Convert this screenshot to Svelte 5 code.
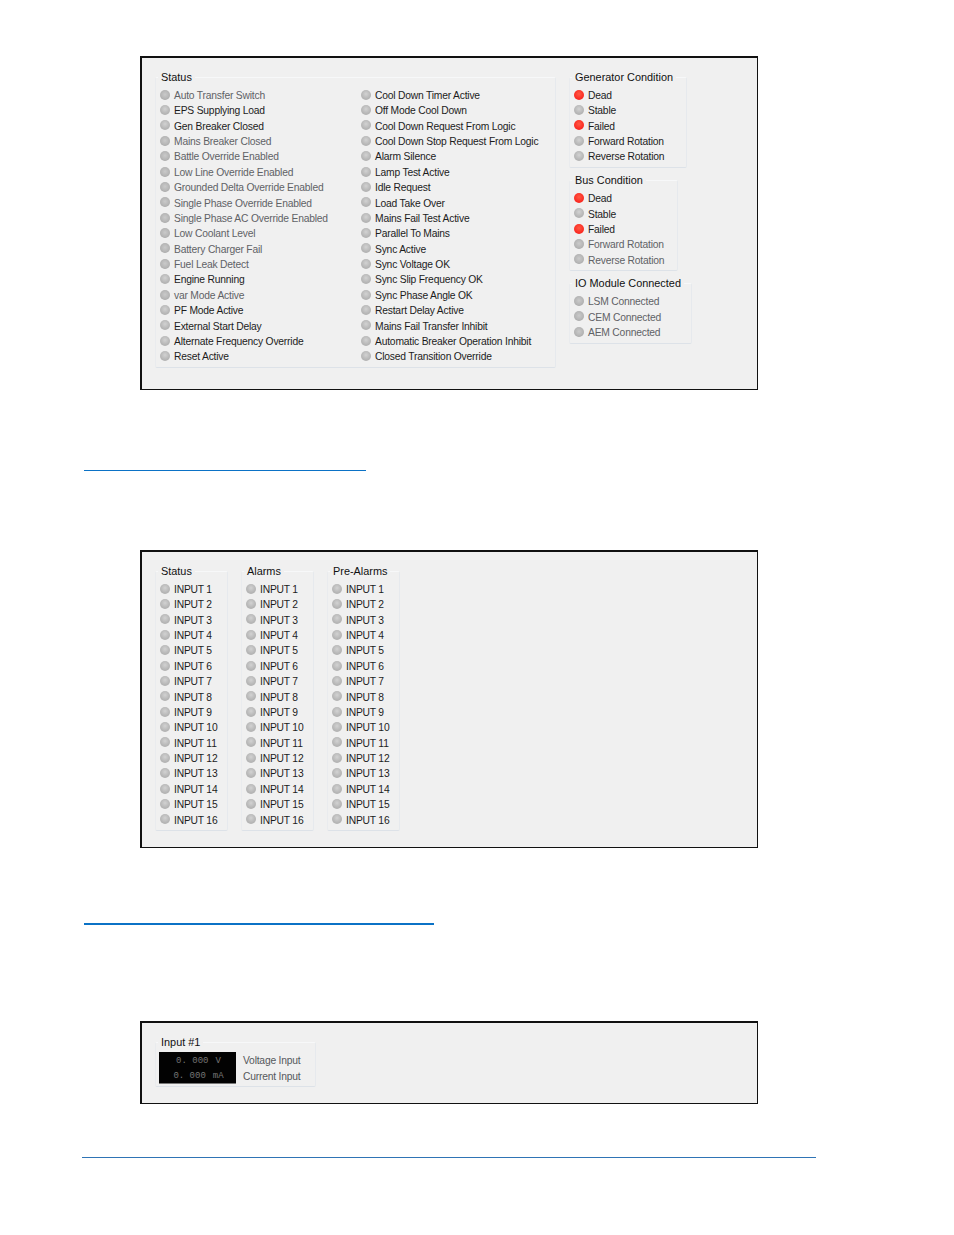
<script>
  const statusA = [
    ['Auto Transfer Switch', 1], ['EPS Supplying Load', 0], ['Gen Breaker Closed', 0],
    ['Mains Breaker Closed', 1], ['Battle Override Enabled', 1], ['Low Line Override Enabled', 1],
    ['Grounded Delta Override Enabled', 1], ['Single Phase Override Enabled', 1],
    ['Single Phase AC Override Enabled', 1], ['Low Coolant Level', 1], ['Battery Charger Fail', 1],
    ['Fuel Leak Detect', 1], ['Engine Running', 0], ['var Mode Active', 1], ['PF Mode Active', 0],
    ['External Start Delay', 0], ['Alternate Frequency Override', 0], ['Reset Active', 0]
  ];
  const statusB = [
    'Cool Down Timer Active', 'Off Mode Cool Down', 'Cool Down Request From Logic',
    'Cool Down Stop Request From Logic', 'Alarm Silence', 'Lamp Test Active', 'Idle Request',
    'Load Take Over', 'Mains Fail Test Active', 'Parallel To Mains', 'Sync Active', 'Sync Voltage OK',
    'Sync Slip Frequency OK', 'Sync Phase Angle OK', 'Restart Delay Active',
    'Mains Fail Transfer Inhibit', 'Automatic Breaker Operation Inhibit', 'Closed Transition Override'
  ].map((t) => [t, 0]);

  const conditions = (dim) => [
    ['Dead', 0, true], ['Stable', 0, false], ['Failed', 0, true],
    ['Forward Rotation', dim], ['Reverse Rotation', dim]
  ];
  const modules = [['LSM Connected', 1], ['CEM Connected', 1], ['AEM Connected', 1]];

  const inputs = Array.from({ length: 16 }, (_, i) => ['INPUT ' + (i + 1), 0]);
  const inputGroups = ['Status', 'Alarms', 'Pre-Alarms'];
</script>

{#snippet rows(items)}
  {#each items as [label, dim, red]}
    <div class="row" class:dim>
      <span class="led" class:red class:off={dim}></span>
      <span class="label">{label}</span>
    </div>
  {/each}
{/snippet}

<div class="page">
  <section class="panel first">
    <fieldset class="status">
      <legend>Status</legend>
      <div class="two-col">
        <div>{@render rows(statusA)}</div>
        <div>{@render rows(statusB)}</div>
      </div>
    </fieldset>
    <div class="side">
      <fieldset class="gen">
        <legend>Generator Condition</legend>
        {@render rows(conditions(0))}
      </fieldset>
      <fieldset class="bus">
        <legend>Bus Condition</legend>
        {@render rows(conditions(1))}
      </fieldset>
      <fieldset class="io">
        <legend>IO Module Connected</legend>
        {@render rows(modules)}
      </fieldset>
    </div>
  </section>

  <div class="link short"></div>

  <section class="panel second">
    {#each inputGroups as name}
      <fieldset class="inputs">
        <legend>{name}</legend>
        {@render rows(inputs)}
      </fieldset>
    {/each}
  </section>

  <div class="link long"></div>

  <section class="panel third">
    <fieldset class="analog">
      <legend>Input #1</legend>
      <div class="analog-body">
        <div class="display">
          <div class="reading"><span>0. 000</span><span>V</span></div>
          <div class="reading"><span>0. 000</span><span>mA</span></div>
        </div>
        <div class="analog-labels">
          <span>Voltage Input</span>
          <span>Current Input</span>
        </div>
      </div>
    </fieldset>
  </section>

  <div class="footer-rule"></div>
</div>

<style>
  :global(body) {
    margin: 0;
    background: #fff;
  }

  .page {
    width: 954px;
    height: 1235px;
    padding-top: 56px;
    box-sizing: border-box;
    font-family: "Liberation Sans", Arial, sans-serif;
    font-size: 10.3px;
    letter-spacing: -0.2px;
    color: #1c1c1c;
    overflow: hidden;
  }

  .panel {
    width: 618px;
    margin-left: 140px;
    box-sizing: border-box;
    background: #f0f0f0;
    border-style: solid;
    border-color: #111;
    border-width: 2px 1px 1px 2px;
    padding: 13px 0 0 13px;
    display: flex;
    align-items: flex-start;
  }

  .first { height: 334px; gap: 13px; }
  .second { height: 298px; gap: 13px; margin-top: 79px; }
  .third { height: 83px; margin-top: 96px; }

  fieldset {
    margin: 0;
    box-sizing: border-box;
    border: 1px solid;
    border-color: #f7f8f9 #e6e9ed #dde2e8 #e9ebee;
    border-radius: 2px;
    padding: 4.79px 0 2.6px 0;
    min-width: 0;
  }

  legend {
    margin-left: 2px;
    padding: 0 3px;
    height: 12px;
    line-height: 12px;
    font-size: 10.9px;
    letter-spacing: 0;
    color: #111;
    white-space: nowrap;
  }

  .status { width: 401px; }
  .two-col {
    display: grid;
    grid-template-columns: 201px 1fr;
  }

  .side {
    display: flex;
    flex-direction: column;
    gap: 6px;
  }
  .gen { width: 118px; padding-bottom: 2.57px; }
  .bus { width: 109px; padding-bottom: 1.8px; }
  .io { width: 123px; margin-top: 0.7px; padding-top: 4.6px; }

  .inputs { width: 73px; }

  .row {
    height: 15.38px;
    display: flex;
    align-items: center;
    padding-left: 3.5px;
    white-space: nowrap;
  }

  .dim .label { color: #5f6266; }

  .led {
    width: 10px;
    height: 10px;
    margin: 0 4.5px 1.5px 0;
    flex: none;
    border-radius: 50%;
    background: radial-gradient(circle at 50% 40%, #d2d2d2 0%, #b8b8b8 55%, #a8a8a8 100%);
  }
  .led.off {
    background: radial-gradient(circle at 50% 45%, #cacaca 0%, #b4b4b4 60%, #8a8a8a 100%);
  }
  .led.red {
    background: radial-gradient(circle at 50% 40%, #ff5a44 0%, #fb2a22 65%, #e32a22 100%);
  }

  .analog { width: 161px; height: 51px; padding: 0; }
  .analog-body {
    display: flex;
    gap: 7px;
    padding: 4px 0 0 3px;
  }
  .display {
    width: 77px;
    height: 32px;
    background: #020202;
    border-bottom: 1px solid #777;
    box-sizing: border-box;
    display: flex;
    flex-direction: column;
    justify-content: space-around;
    padding: 1px 0 0 2px;
    color: #767676;
    font-family: "Liberation Mono", monospace;
    font-size: 9px;
    letter-spacing: 0;
  }
  .reading {
    display: flex;
    justify-content: center;
    gap: 7px;
  }
  .analog-labels {
    display: flex;
    flex-direction: column;
    gap: 3.4px;
    color: #55585c;
    padding-top: 3px;
  }
  .analog-labels span { line-height: 12.6px; }

  .link {
    margin-left: 84px;
    background: #0b72c6;
  }
  .short { width: 282px; height: 1px; margin-top: 80px; }
  .long { width: 350px; height: 2px; margin-top: 75px; }

  .footer-rule {
    width: 734px;
    height: 1px;
    margin: 53px 0 0 82px;
    background: #2f74b5;
  }
</style>
